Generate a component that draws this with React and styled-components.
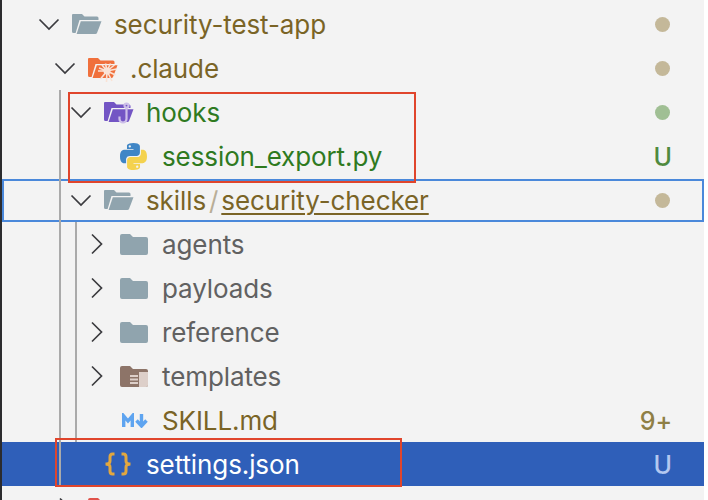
import React from "react";
import styled, { createGlobalStyle } from "styled-components";

const Global = createGlobalStyle`
  html, body { margin: 0; padding: 0; background: #ffffff; }
  #root { width: 708px; height: 500px; overflow: hidden; }
`;

const Window = styled.div`
  position: relative;
  width: 704px;
  height: 500px;
  overflow: hidden;
  box-sizing: border-box;
  border-left: 2px solid #2b2b2e;
  padding-top: 2px;
  background: #f3f3f3;
  font-family: Inter, "Liberation Sans", sans-serif;
  font-size: 26px;
  letter-spacing: -0.1px;
`;

const Group = styled.div`
  position: relative;
  &::before {
    content: "";
    position: absolute;
    z-index: 2;
    top: 0;
    bottom: 0;
    left: ${(p) => p.$guide}px;
    width: 2px;
    background: #aaaaaa;
  }
`;

const RowBox = styled.div`
  position: relative;
  display: flex;
  align-items: center;
  height: 44px;
  padding-left: ${(p) => 36 + p.$depth * 16}px;
  padding-right: 32px;
  background: ${(p) => (p.$selected ? "#2f5fb9" : "transparent")};
  color: ${(p) => p.$color};
  white-space: nowrap;
`;

const ChevronSlot = styled.span`
  display: flex;
  align-items: center;
  justify-content: center;
  flex: none;
  width: 22px;
  height: 44px;
  margin-right: 12px;
  color: #3b3b3f;
`;

const IconSlot = styled.span`
  display: flex;
  align-items: center;
  flex: none;
  width: 30px;
  height: 44px;
  margin-right: 12px;
`;

const Label = styled.span`
  flex: 1;
  align-self: flex-start;
  padding-top: 1px;
  line-height: 44px;
`;

const Separator = styled.span`
  color: #b9ae97;
  margin: 0 3px;
`;

const Underlined = styled.span`
  text-decoration: underline;
  text-decoration-thickness: 2px;
  text-underline-offset: 3px;
`;

const Dot = styled.span`
  flex: none;
  width: 15px;
  height: 15px;
  margin-right: 2px;
  border-radius: 50%;
  background: ${(p) => p.$color};
`;

const Badge = styled.span`
  flex: none;
  align-self: flex-start;
  padding-top: 1px;
  line-height: 44px;
  font-size: 25px;
  font-weight: 500;
  color: ${(p) => p.$color};
`;

const RedBox = styled.div`
  position: absolute;
  z-index: 3;
  left: ${(p) => p.$x}px;
  top: ${(p) => p.$y}px;
  width: ${(p) => p.$w}px;
  height: ${(p) => p.$h}px;
  box-sizing: border-box;
  border: 2px solid #e0452c;
`;

const FocusBox = styled.div`
  position: absolute;
  z-index: 1;
  left: 0;
  right: 0;
  top: 179px;
  height: 43px;
  box-sizing: border-box;
  border: 2px solid #4a88da;
`;

const Chevron = ({ open }) => (
  <svg width="22" height="22" viewBox="0 0 22 22" fill="none" stroke="currentColor" strokeWidth="1.7">
    {open ? <path d="M1.5 6.5 11 16 20.5 6.5" /> : <path d="M6 1.5 15.5 11 6 20.5" />}
  </svg>
);

const OpenFolder = ({ color = "#90a4ae", children }) => (
  <svg width="30" height="22" viewBox="0 0 30 22" style={{ overflow: "visible" }}>
    <path fill={color} d="M1 1h9l2.500 2.500H25A1.500 1.500 0 0 1 26.500 5v2H7.500L3.600 20H1.500A1.500 1.500 0 0 1 0 18.500V2A1 1 0 0 1 1 1Z" />
    <path fill={color} d="M8.800 8.200H29.500L25 20a1.800 1.800 0 0 1-1.600 1H4.600Z" />
    {children}
  </svg>
);

const ClosedFolder = ({ color = "#90a4ae", children }) => (
  <svg width="28" height="21" viewBox="0 0 28 21">
    <path fill={color} d="M2 0h8l3 3h13a2 2 0 0 1 2 2v14a2 2 0 0 1-2 2H2a2 2 0 0 1-2-2V2a2 2 0 0 1 2-2Z" />
    {children}
  </svg>
);

const ClaudeFolder = () => (
  <OpenFolder color="#f0703c">
    <circle cx="19" cy="14" r="3.500" fill="#fbeadf" />
    <g stroke="#f9e3d6" strokeWidth="1.600">
      <path d="M19 14 11 11M19 14l-5-6M19 14l-1.500-7.500M19 14l3.500-7.500M19 14l7.500-6M19 14l9.500-2M19 14l8.500 4M19 14l5 10M19 14l-.5 11M19 14l-6.500 8M19 14h-9" />
    </g>
  </OpenFolder>
);

const HooksFolder = () => (
  <OpenFolder color="#7355c4">
    <g fill="none" stroke="#cdbfe9" strokeWidth="2.200">
      <circle cx="22.500" cy="4.500" r="2" />
      <path d="M22.500 6.500V18a3.500 3.500 0 0 1-7 0v-2.500" />
    </g>
  </OpenFolder>
);

const TemplatesFolder = () => (
  <ClosedFolder color="#8d7468">
    <path fill="#ddcfc9" d="M19 6h9v13a2 2 0 0 1-2 2h-7Z" />
    <path stroke="#ddcfc9" strokeWidth="1.800" d="M10 10h8M10 13.500h8M10 17h8" />
  </ClosedFolder>
);

const PY = "M11.900 0C5.800 0 6.200 2.600 6.200 2.600v2.700h5.800v.8H3.900S0 5.700 0 11.900s3.400 6 3.400 6h2v-2.900s-.1-3.400 3.300-3.400h5.800s3.200.1 3.200-3.100V3.200S18.200 0 11.900 0ZM8.700 1.900a1 1 0 1 1 0 2.100 1 1 0 0 1 0-2.100Z";

const PythonIcon = () => (
  <svg width="27" height="27" viewBox="0 0 24 24">
    <path fill="#3f86c6" fillRule="evenodd" d={PY} />
    <path fill="#f4d24e" fillRule="evenodd" d={PY} transform="rotate(180 12 12)" />
  </svg>
);

const MarkdownWrap = styled.span`
  display: flex;
  margin-left: 2px;
`;

const MarkdownIcon = () => (
  <MarkdownWrap>
    <svg width="26" height="15" viewBox="0 0 26 15" fill="none" stroke="#5ea4f0" strokeWidth="3.400">
      <path d="M1.700 14V3l4.300 5 4.300-5v11" />
      <path d="M19.500 1v11M14.500 7.500l5 5.500 5-5.500" />
    </svg>
  </MarkdownWrap>
);

const BracesIcon = () => (
  <svg width="28" height="24" viewBox="0 0 28 24" fill="none" stroke="#e2a73f" strokeWidth="3">
    <path d="M10.500 2H8.500C6.500 2 6 3 6 5v4c0 2-1 3-4.500 3 3.500 0 4.500 1 4.500 3v4c0 2 .5 3 2.500 3h2" />
    <path d="M17.500 2h2c2 0 2.500 1 2.500 3v4c0 2 1 3 4.500 3-3.500 0-4.500 1-4.500 3v4c0 2-.5 3-2.500 3h-2" />
  </svg>
);

const Row = ({ depth, chevron, icon, color, selected, children, trailing }) => (
  <RowBox $depth={depth} $color={color} $selected={selected}>
    <ChevronSlot>{chevron && <Chevron open={chevron === "open"} />}</ChevronSlot>
    <IconSlot>{icon}</IconSlot>
    <Label>{children}</Label>
    {trailing}
  </RowBox>
);

const BROWN = "#7a6426";
const GREEN = "#2f7a1f";
const GREY = "#616161";
const TAN = "#c4b899";

export default function App() {
  return (
    <>
      <Global />
      <Window>
        <FocusBox />
        <Row depth={0} chevron="open" icon={<OpenFolder />} color={BROWN} trailing={<Dot $color={TAN} />}>
          security-test-app
        </Row>
        <Row depth={1} chevron="open" icon={<ClaudeFolder />} color={BROWN} trailing={<Dot $color={TAN} />}>
          .claude
        </Row>
        <Group $guide={57}>
          <Row depth={2} chevron="open" icon={<HooksFolder />} color={GREEN} trailing={<Dot $color="#a0bf94" />}>
            hooks
          </Row>
          <Row depth={3} icon={<PythonIcon />} color={GREEN} trailing={<Badge $color="#4f8a3e">U</Badge>}>
            session_export.py
          </Row>
          <Row depth={2} chevron="open" icon={<OpenFolder />} color={BROWN} trailing={<Dot $color={TAN} />}>
            skills<Separator>/</Separator>
            <Underlined>security-checker</Underlined>
          </Row>
          <Group $guide={73}>
            <Row depth={3} chevron="closed" icon={<ClosedFolder />} color={GREY}>agents</Row>
            <Row depth={3} chevron="closed" icon={<ClosedFolder />} color={GREY}>payloads</Row>
            <Row depth={3} chevron="closed" icon={<ClosedFolder />} color={GREY}>reference</Row>
            <Row depth={3} chevron="closed" icon={<TemplatesFolder />} color={GREY}>templates</Row>
            <Row depth={3} icon={<MarkdownIcon />} color={BROWN} trailing={<Badge $color="#8f7f45">9+</Badge>}>
              SKILL.md
            </Row>
          </Group>
          <Row depth={2} icon={<BracesIcon />} color="#ffffff" selected trailing={<Badge $color="#b4c8f0">U</Badge>}>
            settings.json
          </Row>
        </Group>
        <Row depth={1} chevron="closed" icon={<ClosedFolder color="#e0524a" />} />
        <RedBox $x={66} $y={92} $w={348} $h={91} />
        <RedBox $x={53} $y={438} $w={347} $h={49} />
      </Window>
    </>
  );
}
